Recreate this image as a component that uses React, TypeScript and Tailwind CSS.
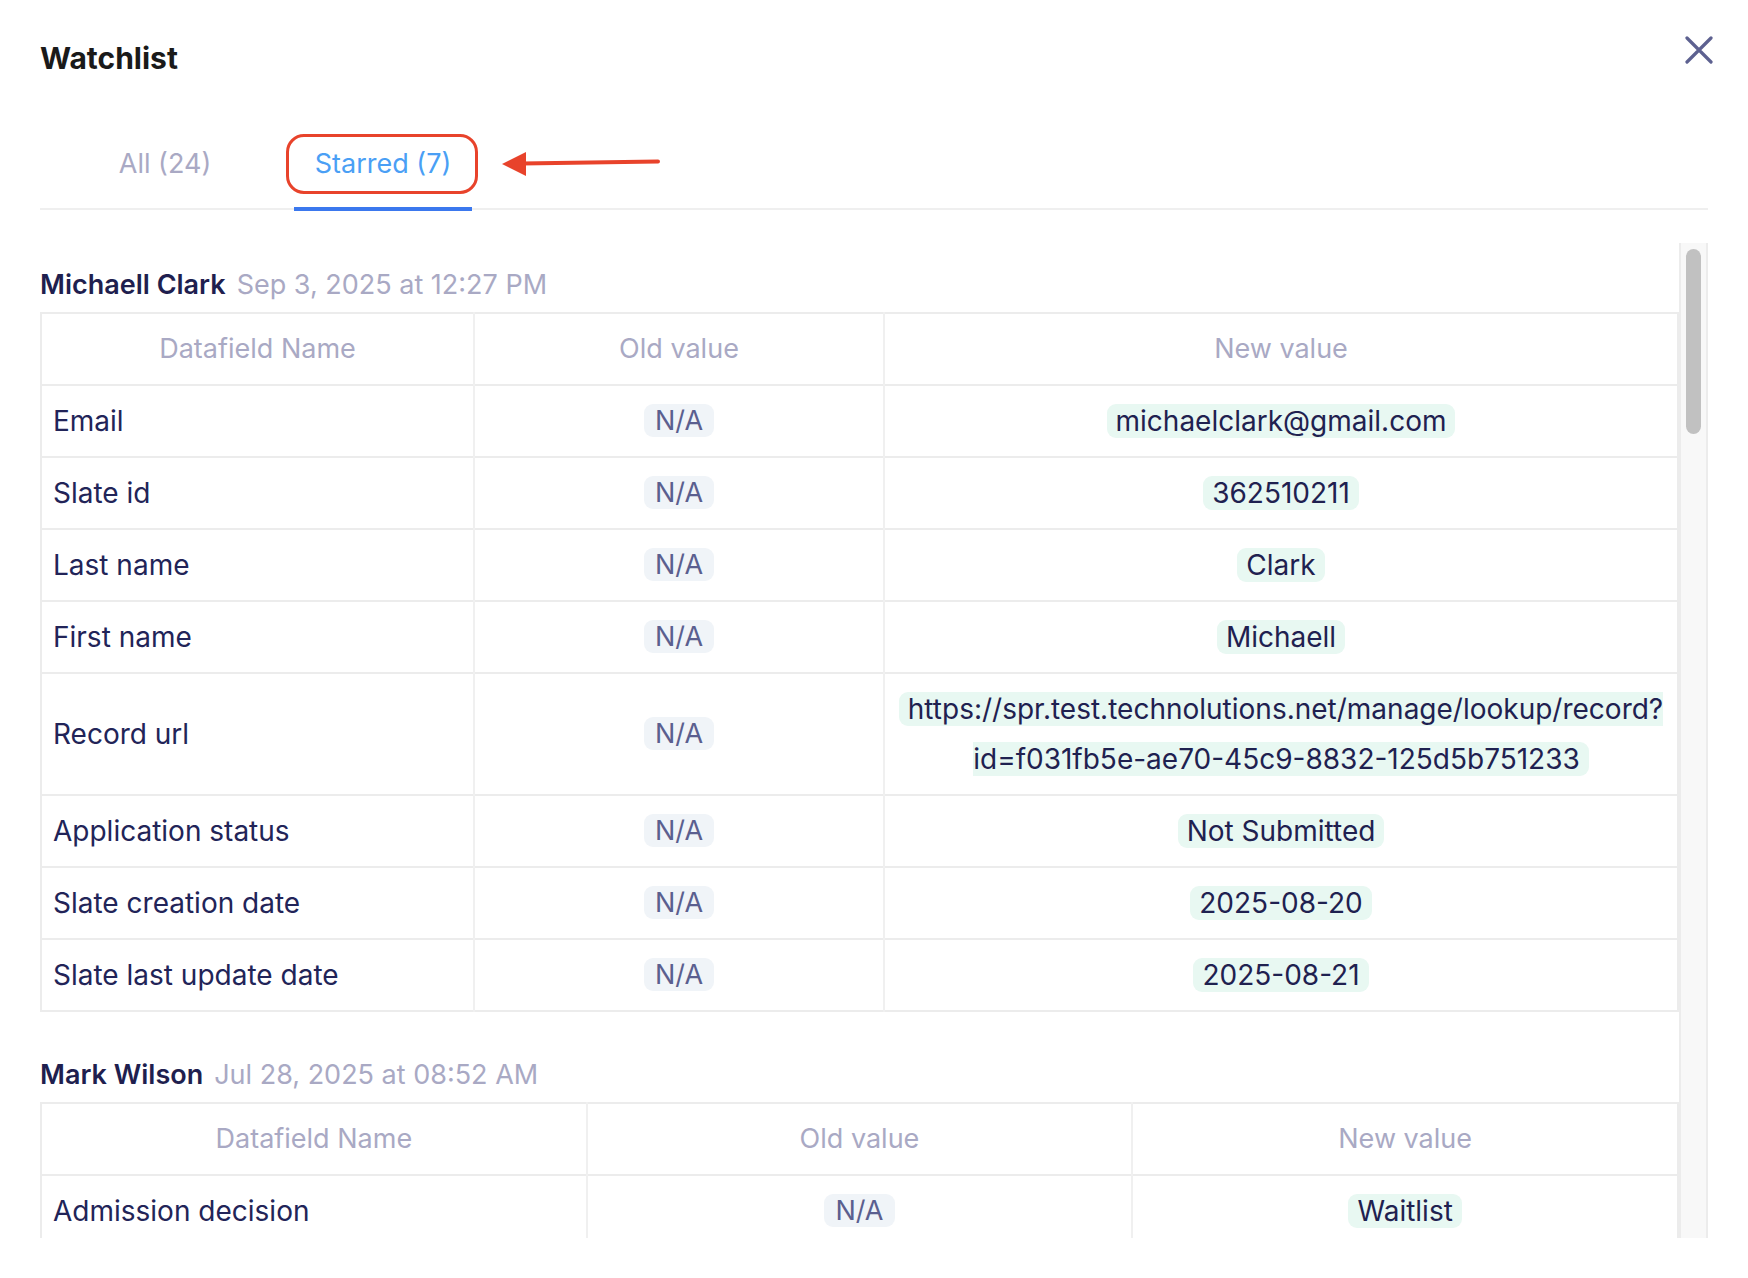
import React from "react";

type Fila = { campo: string; anterior: string; nuevo: string };

const filasClark: Fila[] = [
  { campo: "Email", anterior: "N/A", nuevo: "michaelclark@gmail.com" },
  { campo: "Slate id", anterior: "N/A", nuevo: "362510211" },
  { campo: "Last name", anterior: "N/A", nuevo: "Clark" },
  { campo: "First name", anterior: "N/A", nuevo: "Michaell" },
  {
    campo: "Record url",
    anterior: "N/A",
    nuevo: "https://spr.test.technolutions.net/manage/lookup/record?\u200Bid=f031fb5e-ae70-45c9-8832-125d5b751233",
  },
  { campo: "Application status", anterior: "N/A", nuevo: "Not Submitted" },
  { campo: "Slate creation date", anterior: "N/A", nuevo: "2025-08-20" },
  { campo: "Slate last update date", anterior: "N/A", nuevo: "2025-08-21" },
];

const filasWilson: Fila[] = [
  { campo: "Admission decision", anterior: "N/A", nuevo: "Waitlist" },
];

function TablaCambios({ filas, fija }: { filas: Fila[]; fija?: boolean }) {
  return (
    <table className="w-full table-fixed border-collapse border-2 border-[#ececec]">
      <colgroup>
        {fija ? (
          <>
            <col />
            <col />
            <col />
          </>
        ) : (
          <>
            <col className="w-[433px]" />
            <col className="w-[410px]" />
            <col />
          </>
        )}
      </colgroup>
      <thead>
        <tr className="border-b-2 border-[#ececec] text-[27px]">
          <th className="border-r-2 border-[#f0f0f0] py-[10px] text-center font-normal leading-[50px] text-[#a9a9c4]">
            Datafield Name
          </th>
          <th className="border-r-2 border-[#f0f0f0] py-[10px] text-center font-normal leading-[50px] text-[#a9a9c4]">
            Old value
          </th>
          <th className="py-[10px] text-center font-normal leading-[50px] text-[#a9a9c4]">New value</th>
        </tr>
      </thead>
      <tbody>
        {filas.map((fila) => (
          <tr key={fila.campo} className="border-b-2 border-[#ececec]">
            <td className="border-r-2 border-[#f0f0f0] py-[10px] pl-[11px] text-[28px] leading-[50px] text-[#222458]">
              {fila.campo}
            </td>
            <td className="border-r-2 border-[#f0f0f0] py-[10px] text-center text-[27px] leading-[50px]">
              <span className="rounded-[9px] bg-[#f0f4f8] px-[11px] text-[#5b5f8f]">{fila.anterior}</span>
            </td>
            <td className="px-[8px] py-[10px] text-center text-[28px] leading-[50px] break-words">
              <span className="rounded-[9px] bg-[#e8f8f2] px-[9px] text-[#1f2150]">{fila.nuevo}</span>
            </td>
          </tr>
        ))}
      </tbody>
    </table>
  );
}

function Encabezado({ nombre, fecha }: { nombre: string; fecha: string }) {
  return (
    <div className="mb-[11px] flex items-baseline gap-[11px] text-[27px] leading-[32px]">
      <span className="font-semibold text-[#1f1f4f]">{nombre}</span>
      <span className="text-[#a9a9c4]">{fecha}</span>
    </div>
  );
}

export default function App() {
  return (
    <div className="h-[1278px] w-[1748px] overflow-hidden bg-white font-['Inter',sans-serif]">
      <div className="px-[40px]">
        {/* Cabecera */}
        <div className="flex h-[118px] items-start justify-between pt-[36px]">
          <h1 className="text-[30px] font-bold leading-[44px] text-[#1a1a1a]">Watchlist</h1>
          <svg width="28" height="28" viewBox="0 0 28 28" className="mr-[-5px]">
            <path d="M2 2 L26 26 M26 2 L2 26" stroke="#5d6190" strokeWidth="3.2" strokeLinecap="round" />
          </svg>
        </div>

        {/* Pestañas */}
        <div className="flex h-[92px] border-b-2 border-[#efefef] text-[27px]">
          <div className="ml-[36px] flex w-[178px] items-center justify-center pt-[2px] text-[#a9a9c4]">All (24)</div>
          <div className="relative ml-[40px] flex w-[178px] items-center justify-center pt-[2px] text-[#4a9ff5]">
            Starred (7)
            <div className="absolute bottom-[-3px] left-0 right-0 h-[4px] bg-[#3b78ee]" />
            <div className="absolute left-[-8px] top-[16px] h-[60px] w-[192px] rounded-[18px] border-[3px] border-[#e8432b]" />
            <svg
              className="absolute left-[206px] top-[30px]"
              width="160"
              height="30"
              viewBox="0 0 160 30"
            >
              <path d="M22 15.5 L158 13.5" stroke="#e8432b" strokeWidth="4" strokeLinecap="round" />
              <path d="M2 16 L26 4 L26 28 Z" fill="#e8432b" />
            </svg>
          </div>
        </div>

        {/* Zona con scroll */}
        <div className="mt-[33px] flex h-[995px]">
          <div className="flex-1 overflow-hidden pt-[26px]">
            <Encabezado nombre="Michaell Clark" fecha="Sep 3, 2025 at 12:27 PM" />
            <TablaCambios filas={filasClark} />
            <div className="mt-[47px]">
              <Encabezado nombre="Mark Wilson" fecha="Jul 28, 2025 at 08:52 AM" />
              <TablaCambios filas={filasWilson} fija />
            </div>
          </div>
          <div className="w-[29px] border-x-2 border-[#ececec] bg-[#f8f8f8] px-[5px] pt-[6px]">
            <div className="h-[185px] rounded-full bg-[#c1c1c1]" />
          </div>
        </div>
      </div>
    </div>
  );
}
